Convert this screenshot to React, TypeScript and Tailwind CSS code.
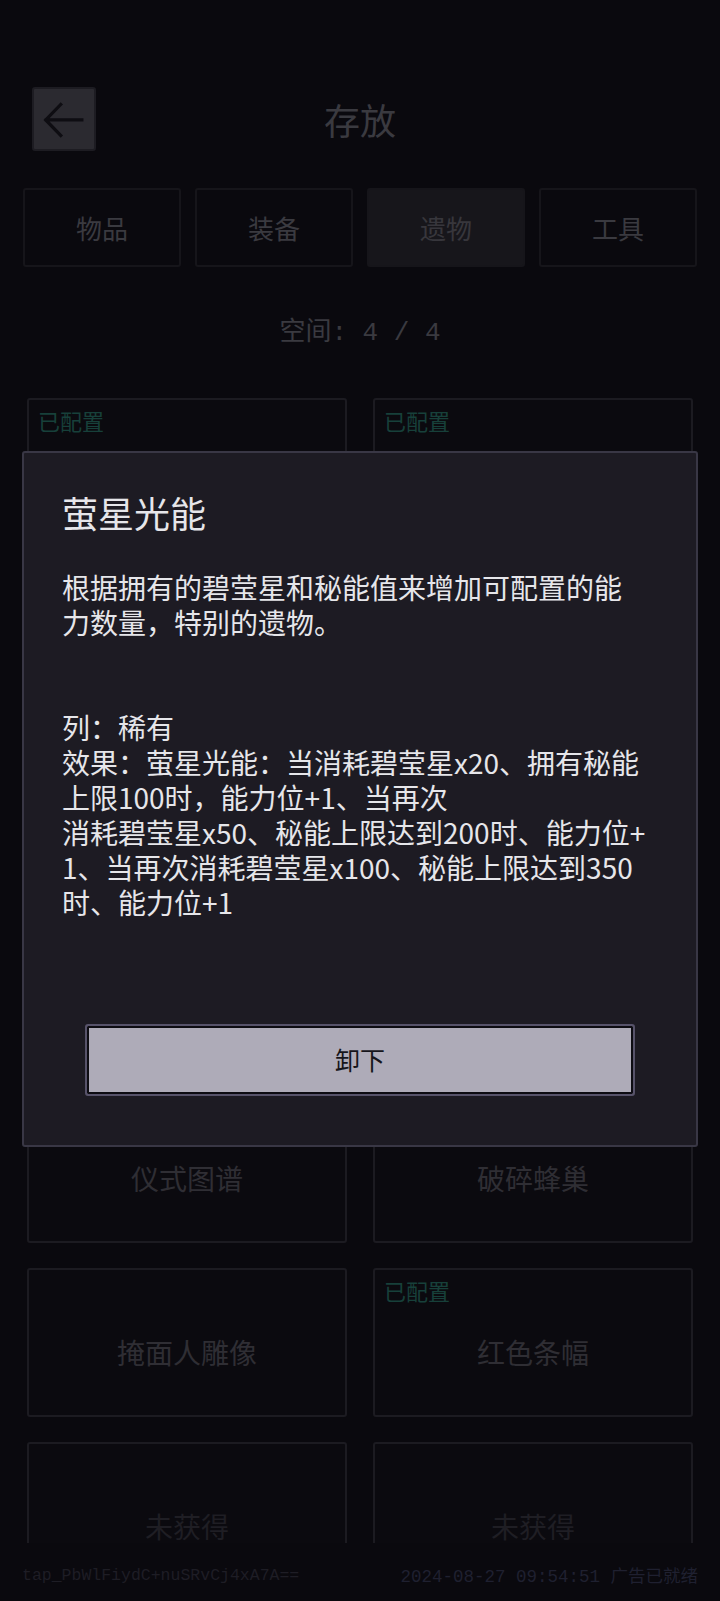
import React from "react";

interface Relic {
  name: string;
  equipped?: boolean;
  locked?: boolean;
}

// rows 1-4 sit under the detail panel, so their names are left blank
const relics: Relic[] = [
  { name: "", equipped: true },
  { name: "", equipped: true },
  { name: "" },
  { name: "" },
  { name: "" },
  { name: "" },
  { name: "" },
  { name: "" },
  { name: "仪式图谱" },
  { name: "破碎蜂巢" },
  { name: "掩面人雕像" },
  { name: "红色条幅", equipped: true },
  { name: "未获得", locked: true },
  { name: "未获得", locked: true },
];

const tabs = ["物品", "装备", "遗物", "工具"];

const cjk = { fontFamily: '"Noto Sans CJK SC", "Noto Sans", sans-serif' };
const mono = {
  fontFamily: '"Liberation Mono", "DejaVu Sans Mono", "Noto Sans CJK SC", monospace',
};

function BackArrow() {
  return (
    <svg width="64" height="64" viewBox="0 0 64 64" fill="none">
      <path
        d="M51 33H13M28.5 16.5L12.5 33L28.5 49.5"
        stroke="#0e0d12"
        strokeWidth="3.5"
        strokeLinecap="square"
      />
    </svg>
  );
}

function RelicCard({ name, equipped, locked }: Relic) {
  return (
    <div className="h-[149px] flex flex-col rounded-[3px] border-2 border-[#1c1b21] bg-[#0b0a0f]">
      <div className="h-[24px] px-[9px] pt-[8px] text-[22px] leading-[24px] text-[#17403a]">
        {equipped ? "已配置" : ""}
      </div>
      <div
        className={`flex-1 flex items-center justify-center pb-[6px] text-[28px] ${
          locked ? "text-[#1f1e24]" : "text-[#2f2e34]"
        }`}
      >
        {name}
      </div>
    </div>
  );
}

function RelicDetail() {
  return (
    <div className="absolute left-[22px] top-[451px] w-[676px] rounded-[3px] border-2 border-[#393745] bg-[#1d1b23] px-[38px] pt-[37px] pb-[49px] text-[#e6e6ea]">
      <div className="text-[36px] leading-[44px]">萤星光能</div>
      <div className="mt-[36px] text-[28px] leading-[35px] whitespace-nowrap">
        <div>根据拥有的碧莹星和秘能值来增加可配置的能</div>
        <div>力数量，特别的遗物。</div>
      </div>
      <div className="mt-[70px] text-[28px] leading-[35px] whitespace-nowrap">
        <div>列：稀有</div>
        <div>效果：萤星光能：当消耗碧莹星x20、拥有秘能</div>
        <div>上限100时，能力位+1、当再次</div>
        <div>消耗碧莹星x50、秘能上限达到200时、能力位+</div>
        <div>1、当再次消耗碧莹星x100、秘能上限达到350</div>
        <div>时、能力位+1</div>
      </div>
      <div className="mt-[104px] flex justify-center">
        <button className="w-[550px] h-[72px] rounded-[3px] border-2 border-[#57536a] bg-[#aeabb8] shadow-[inset_0_0_0_2px_#0d0c12] text-[25px] text-[#16151b]">
          卸下
        </button>
      </div>
    </div>
  );
}

export default function App() {
  return (
    <div className="relative h-[1601px] w-[720px] overflow-hidden bg-[#0a090e] flex flex-col" style={cjk}>
      <div className="flex-1 overflow-hidden">
        <div className="grid grid-cols-[64px_1fr_64px] items-center px-[32px] pt-[87px]">
          <button className="h-[64px] w-[64px] rounded-[3px] border-2 border-[#1d1c22] bg-[#2b2a30] flex items-center justify-center">
            <BackArrow />
          </button>
          <div className="text-center text-[36px] leading-[44px] text-[#3a3a40]">存放</div>
          <div />
        </div>

        <div className="mt-[37px] grid grid-cols-4 gap-[14px] px-[23px]">
          {tabs.map((t, i) => (
            <div
              key={t}
              className={`h-[79px] flex items-center justify-center rounded-[3px] border-2 border-[#16151a] text-[26px] ${
                i === 2 ? "bg-[#17161b] text-[#37363c]" : "bg-[#0a090e] text-[#3a3a40]"
              }`}
            >
              {t}
            </div>
          ))}
        </div>

        <div className="mt-[48px] text-center text-[26px] leading-[36px] text-[#3a3a40]" style={mono}>
          空间: 4 / 4
        </div>

        <div className="mt-[47px] grid grid-cols-2 gap-x-[26px] gap-y-[25px] px-[27px]">
          {relics.map((r, i) => (
            <RelicCard key={i} {...r} />
          ))}
        </div>
      </div>

      <div className="h-[58px] shrink-0 flex items-center justify-between px-[22px] pt-[8px] bg-[#0a090e]" style={mono}>
        <span className="text-[16.5px] text-[#1e1d25]">tap_PbWlFiydC+nuSRvCj4xA7A==</span>
        <span className="text-[17.5px] text-[#1f2030]">
          2024-08-27 09:54:51 <span style={cjk}>广告已就绪</span>
        </span>
      </div>

      <RelicDetail />
    </div>
  );
}
